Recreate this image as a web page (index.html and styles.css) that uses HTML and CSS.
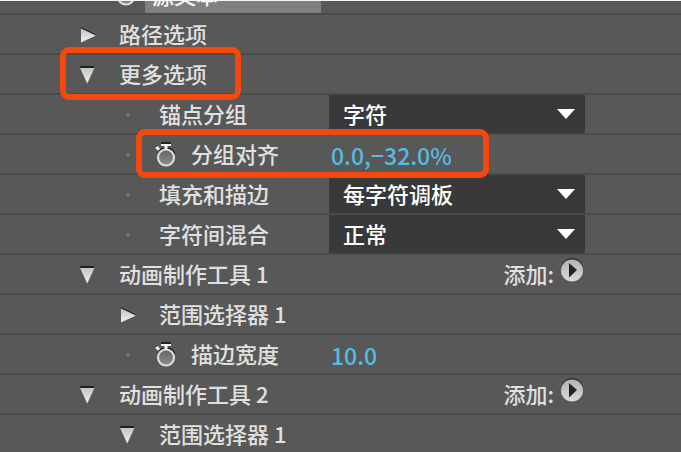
FILE: index.html
```html
<!DOCTYPE html>
<html lang="zh-CN">
<head>
<meta charset="utf-8">
<meta name="viewport" content="width=device-width, initial-scale=1">
<title>文本属性</title>
<link rel="stylesheet" href="styles.css">
</head>
<body>
<svg class="symbols" aria-hidden="true">
  <defs>
    <linearGradient id="metal" x1="0" y1="0" x2="0" y2="1">
      <stop offset="0" stop-color="#c4c4c4"/>
      <stop offset="1" stop-color="#f2f2f2"/>
    </linearGradient>
    <linearGradient id="face" x1="0" y1="0" x2="0" y2="1">
      <stop offset="0" stop-color="#656565"/>
      <stop offset="1" stop-color="#8a8a8a"/>
    </linearGradient>
    <linearGradient id="disc" x1="0" y1="0" x2="0" y2="1">
      <stop offset="0" stop-color="#b2b2b2"/>
      <stop offset="1" stop-color="#d8d8d8"/>
    </linearGradient>
  </defs>
  <symbol id="closed" viewBox="0 0 16 18">
    <path d="M1 1 L16 8.5 L15 10 L1 3Z" fill="#202020"/>
    <path d="M1 2.5 L16 9.5 L1 16.5Z" fill="url(#metal)"/>
  </symbol>
  <symbol id="open" viewBox="0 0 16 18">
    <path d="M0 0H14L13.500 4H.5Z" fill="#202020"/>
    <path d="M0 2H14.500L7.250 17.500Z" fill="url(#metal)"/>
  </symbol>
  <symbol id="watch" viewBox="0 0 22 26">
    <path d="M3 12.500A8.700 8.700 0 0 1 19.500 12M6 1H16" fill="none" stroke="#222" stroke-width="2"/>
    <circle cx="11" cy="15.500" r="8" fill="url(#face)" stroke="#dcdcdc" stroke-width="2.200"/>
    <path d="M6 2H16V4H12.500V7H9.500V4H6Z" fill="#f4f4f4"/>
    <path d="M0 6L3 4L5 7L3 8.500Z" fill="#f4f4f4"/>
  </symbol>
  <symbol id="play" viewBox="0 0 22 24">
    <circle cx="11" cy="11" r="11" fill="#2b2b2b"/>
    <circle cx="11" cy="12.500" r="11" fill="url(#disc)"/>
    <path d="M8 5L16 12L8 19.500Z" fill="#222"/>
  </symbol>
</svg>

<main class="panel">
  <div class="row row-cut">
    <div class="name name-source">
      <button class="icon-btn" aria-label="源文本关键帧"><svg class="watch"><use href="#watch"/></svg></button>
      <button class="source">源文本</button>
    </div>
  </div>

  <div class="row">
    <div class="name">
      <button class="icon-btn" aria-label="展开"><svg class="toggle"><use href="#closed"/></svg></button>
      <span class="text">路径选项</span>
    </div>
  </div>

  <div class="row">
    <div class="name">
      <button class="icon-btn" aria-label="折叠"><svg class="toggle"><use href="#open"/></svg></button>
      <span class="text">更多选项</span>
    </div>
    <div class="mark mark-group"></div>
  </div>

  <div class="row">
    <div class="name nested">
      <i class="dot"></i>
      <label class="text" for="anchor">锚点分组</label>
    </div>
    <div class="value menu">
      <select id="anchor"><option>字符</option></select>
      <svg class="arrow" viewBox="0 0 18 10"><path d="M0 0H18L9 10Z"/></svg>
    </div>
  </div>

  <div class="row">
    <div class="name nested">
      <i class="dot"></i>
      <span class="timed">
        <button class="icon-btn" aria-label="分组对齐关键帧"><svg class="watch"><use href="#watch"/></svg></button>
        <label class="text" for="align">分组对齐</label>
      </span>
    </div>
    <div class="value"><input class="number" id="align" type="text" value="0.0,−32.0%"></div>
    <div class="mark mark-align"></div>
  </div>

  <div class="row">
    <div class="name nested">
      <i class="dot"></i>
      <label class="text" for="fill">填充和描边</label>
    </div>
    <div class="value menu">
      <select id="fill"><option>每字符调板</option></select>
      <svg class="arrow" viewBox="0 0 18 10"><path d="M0 0H18L9 10Z"/></svg>
    </div>
  </div>

  <div class="row">
    <div class="name nested">
      <i class="dot"></i>
      <label class="text" for="blend">字符间混合</label>
    </div>
    <div class="value menu">
      <select id="blend"><option>正常</option></select>
      <svg class="arrow" viewBox="0 0 18 10"><path d="M0 0H18L9 10Z"/></svg>
    </div>
  </div>

  <div class="row">
    <div class="name">
      <button class="icon-btn" aria-label="折叠"><svg class="toggle"><use href="#open"/></svg></button>
      <span class="text">动画制作工具 1</span>
    </div>
    <div class="value add">
      <span class="text">添加:</span>
      <button class="icon-btn" aria-label="添加"><svg class="play"><use href="#play"/></svg></button>
    </div>
  </div>

  <div class="row">
    <div class="name nested">
      <button class="icon-btn" aria-label="展开"><svg class="toggle"><use href="#closed"/></svg></button>
      <span class="text">范围选择器 1</span>
    </div>
  </div>

  <div class="row">
    <div class="name nested">
      <i class="dot"></i>
      <span class="timed">
        <button class="icon-btn" aria-label="描边宽度关键帧"><svg class="watch"><use href="#watch"/></svg></button>
        <label class="text" for="width">描边宽度</label>
      </span>
    </div>
    <div class="value"><input class="number" id="width" type="text" value="10.0"></div>
  </div>

  <div class="row">
    <div class="name">
      <button class="icon-btn" aria-label="折叠"><svg class="toggle"><use href="#open"/></svg></button>
      <span class="text">动画制作工具 2</span>
    </div>
    <div class="value add">
      <span class="text">添加:</span>
      <button class="icon-btn" aria-label="添加"><svg class="play"><use href="#play"/></svg></button>
    </div>
  </div>

  <div class="row">
    <div class="name nested">
      <button class="icon-btn" aria-label="折叠"><svg class="toggle"><use href="#open"/></svg></button>
      <span class="text">范围选择器 1</span>
    </div>
  </div>
</main>
</body>
</html>
```

FILE: styles.css
```css
* {
  box-sizing: border-box;
}

html {
  background: #585858;
}

body {
  margin: 0;
  height: 100vh;
  overflow: hidden;
  color: #e0e0e0;
  font: 500 22px/32px "Noto Sans CJK SC", sans-serif;
}

.symbols {
  position: absolute;
  width: 0;
  height: 0;
}

.panel {
  border-top: 1px solid #f4f4f4;
}

.row {
  position: relative;
  display: grid;
  grid-template-columns: 329px 256px 1fr;
  height: 40px;
  border-bottom: 2px solid #4a4a4a;
}

.row-cut {
  height: 14px;
  align-content: end;
  overflow: hidden;
}

.name {
  display: flex;
  align-items: center;
  gap: 23px;
  padding: 1px 0 0 80px;
  white-space: nowrap;
}

.text {
  padding-bottom: 3px;
}

.nested {
  padding-left: 120px;
}

.name-source {
  gap: 8px;
  height: 38px;
  padding: 0 8px 0 115px;
}

.source {
  flex: 1;
  height: 38px;
  padding: 0 0 0 7px;
  border: 0;
  background: #808080;
  color: #f4f4f4;
  font: inherit;
  text-align: left;
}

.icon-btn {
  display: flex;
  padding: 0;
  border: 0;
  background: none;
}

.toggle {
  width: 16px;
  height: 18px;
}

.dot {
  width: 4px;
  height: 4px;
  margin: 0 6px;
  border-radius: 50%;
  background: #707070;
}

.timed {
  display: flex;
  align-items: center;
  gap: 14px;
  margin-left: -4px;
}

.watch {
  width: 22px;
  height: 26px;
}

.value {
  display: flex;
  align-items: center;
}

.menu {
  display: grid;
}

.menu > * {
  grid-area: 1 / 1;
}

select {
  width: 100%;
  height: 38px;
  padding: 0 40px 2px 14px;
  appearance: none;
  border: 0;
  border-radius: 0;
  background: #393939;
  color: #fff;
  font: inherit;
}

.arrow {
  width: 18px;
  height: 10px;
  justify-self: end;
  margin-right: 10px;
  fill: #fff;
  pointer-events: none;
}

.number {
  width: 100%;
  height: 38px;
  padding: 2px 0 0 2px;
  border: 0;
  background: none;
  color: #52bce2;
  font: inherit;
  font-size: 23px;
}

.add {
  justify-content: flex-end;
  gap: 7px;
  padding: 1px 2px 0 0;
}

.play {
  width: 22px;
  height: 24px;
  margin-bottom: 9px;
}

.mark {
  position: absolute;
  border: 6px solid #f4480f;
  border-radius: 9px;
  pointer-events: none;
  z-index: 1;
}

.mark-group {
  left: 60px;
  top: -8px;
  width: 181px;
  height: 53px;
}

.mark-align {
  left: 136px;
  top: -6px;
  width: 353px;
  height: 49px;
}
```
